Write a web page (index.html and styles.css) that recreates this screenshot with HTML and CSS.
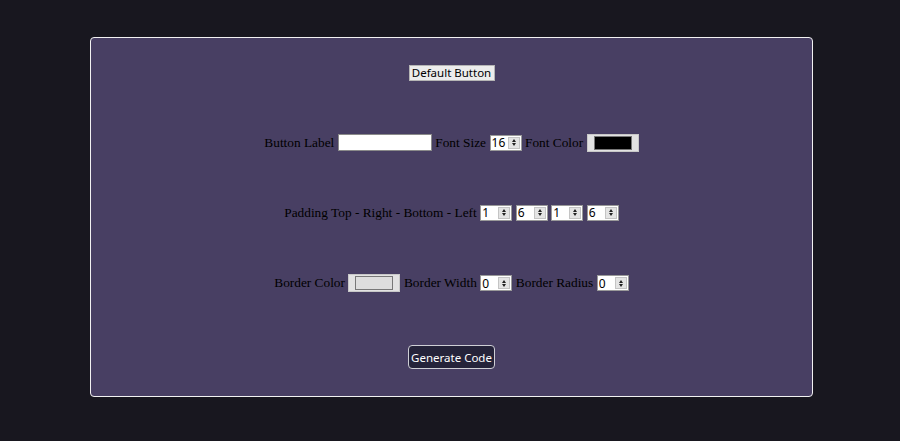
FILE: index.html
```html
<!DOCTYPE html>
<html>
<head>
<meta charset="utf-8">
<link rel="stylesheet" href="styles.css">
</head>
<body>
<div class="card">
  <div class="row"><button class="preview">Default Button</button></div>
  <div class="row">
    <label>Button Label</label> <input class="text" type="text">
    <label>Font Size</label>
    <span class="numwrap"><input class="num" type="number" value="16"><span class="spin"><i class="up"></i><i class="dn"></i></span></span>
    <label>Font Color</label> <input class="color" type="color" value="#000000">
  </div>
  <div class="row">
    <label>Padding Top - Right - Bottom - Left</label>
    <span class="numwrap"><input class="num" type="number" value="1"><span class="spin"><i class="up"></i><i class="dn"></i></span></span>
    <span class="numwrap"><input class="num" type="number" value="6"><span class="spin"><i class="up"></i><i class="dn"></i></span></span>
    <span class="numwrap"><input class="num" type="number" value="1"><span class="spin"><i class="up"></i><i class="dn"></i></span></span>
    <span class="numwrap"><input class="num" type="number" value="6"><span class="spin"><i class="up"></i><i class="dn"></i></span></span>
  </div>
  <div class="row">
    <label>Border Color</label> <input class="color" type="color" value="#dddddd">
    <label>Border Width</label>
    <span class="numwrap"><input class="num" type="number" value="0"><span class="spin"><i class="up"></i><i class="dn"></i></span></span>
    <label>Border Radius</label>
    <span class="numwrap"><input class="num" type="number" value="0"><span class="spin"><i class="up"></i><i class="dn"></i></span></span>
  </div>
  <div class="row"><button class="gen">Generate Code</button></div>
</div>
</body>
</html>
```
FILE: styles.css
```css
html, body { margin: 0; padding: 0; }
body {
  background: #18171f;
  font-family: "Liberation Serif", serif;
  font-size: 13.33px;
  color: #000;
  height: 441px;
}
.card {
  box-sizing: border-box;
  width: 723px;
  height: 360px;
  margin: 37px 0 0 90px;
  background: #483f63;
  border: 1.5px solid #f2f2f2;
  border-radius: 4px;
  display: flex;
  flex-direction: column;
  justify-content: space-around;
  align-items: center;
  padding: 0;
}
.row {
  display: flex;
  align-items: center;
  gap: 3.5px;
  white-space: nowrap;
}
.preview {
  font-family: "Noto Sans", "DejaVu Sans", sans-serif;
  font-size: 11.5px;
  padding: 0;
  width: 86px;
  height: 16px;
  line-height: 14px;
  background: #ececec;
  border: 1px solid #b5b5b5;
  color: #000;
  border-radius: 0;
}
.gen {
  font-family: "Noto Sans", "DejaVu Sans", sans-serif;
  font-size: 11.5px;
  padding: 0;
  height: 24px;
  width: 87px;
  background: #25233a;
  color: #fff;
  border: 1px solid #cfcfd6;
  border-radius: 4px;
}
.text {
  width: 94px;
  height: 17px;
  box-sizing: border-box;
  border: 1px solid #8a8a8a;
  background: #fff;
  padding: 0 2px;
}
.numwrap {
  position: relative;
  display: inline-block;
  width: 32px;
  height: 16px;
}
.num {
  width: 32px;
  height: 16px;
  box-sizing: border-box;
  border: 1px solid #999;
  background: #fff;
  padding: 0 1px;
  margin: 0;
  font-family: "Noto Sans", "DejaVu Sans", sans-serif;
  font-size: 12px;
  color: #000;
  display: block;
}
.num::-webkit-inner-spin-button,
.num::-webkit-outer-spin-button { -webkit-appearance: none; margin: 0; display: none; }
.spin {
  position: absolute;
  right: 2px;
  top: 2px;
  width: 12px;
  height: 12px;
  box-sizing: border-box;
  background: #e4e4e4;
  border: 1px solid #c4c4c4;
  display: flex;
  flex-direction: column;
  align-items: center;
  justify-content: center;
  gap: 1px;
}
.spin i {
  display: block;
  width: 0;
  height: 0;
  border-left: 2.5px solid transparent;
  border-right: 2.5px solid transparent;
}
.spin .up { border-bottom: 3px solid #222; }
.spin .dn { border-top: 3px solid #222; }
.color {
  width: 52px;
  height: 18px;
  box-sizing: border-box;
  padding: 1px 6px;
  border: 1px solid #c8c8c8;
  background: #e2e2e2;
}
.color::-webkit-color-swatch-wrapper { padding: 0; }
.color::-webkit-color-swatch { border: 1px solid #777; }
```
